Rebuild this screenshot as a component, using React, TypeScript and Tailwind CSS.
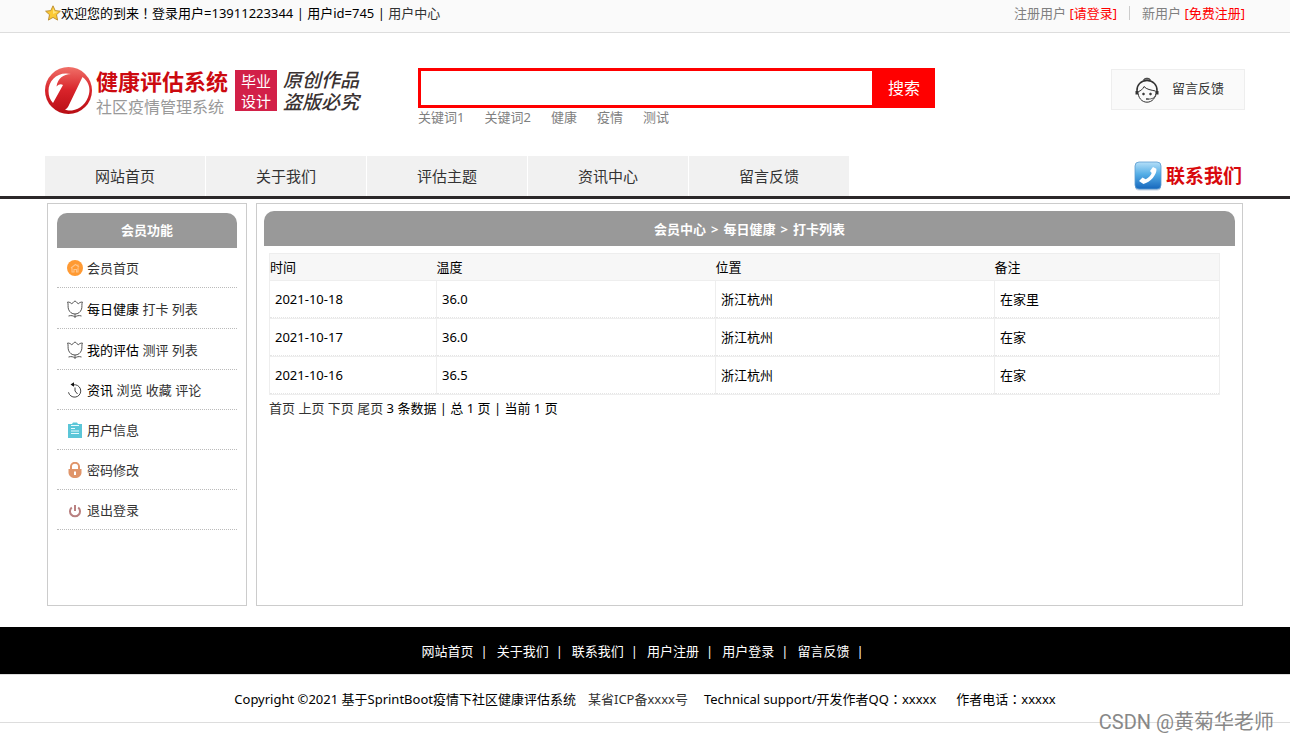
import React, { FC, ReactNode } from 'react';

const navItems = ['网站首页', '关于我们', '评估主题', '资讯中心', '留言反馈'];
const keywords = ['关键词1', '关键词2', '健康', '疫情', '测试'];
const footerItems = ['网站首页', '关于我们', '联系我们', '用户注册', '用户登录', '留言反馈'];
const records = [
  { date: '2021-10-18', temperature: '36.0', place: '浙江杭州', note: '在家里' },
  { date: '2021-10-17', temperature: '36.0', place: '浙江杭州', note: '在家' },
  { date: '2021-10-16', temperature: '36.5', place: '浙江杭州', note: '在家' },
];

const StarIcon: FC = () => (
  <svg width="16" height="16" viewBox="0 0 16 16" aria-hidden="true">
    <path
      d="M8 .8l2.2 4.8 5.2.6-3.9 3.5 1.1 5.4L8 12.4l-4.6 2.7 1.1-5.4L.6 6.2l5.2-.6z"
      fill="#fbc934"
      stroke="#b98a2e"
      strokeWidth="0.9"
      strokeLinejoin="round"
    />
    <path d="M8 3l1.5 3.4 3.4.4L8 9z" fill="#fff0a0" opacity="0.7" />
  </svg>
);

const Logo: FC = () => (
  <svg width="48" height="48" viewBox="0 0 48 48" aria-hidden="true">
    <defs>
      <linearGradient id="logo-red" x1="0" y1="0" x2="0" y2="1">
        <stop offset="0" stopColor="#f07068" />
        <stop offset="0.5" stopColor="#d8232a" />
        <stop offset="1" stopColor="#b80d14" />
      </linearGradient>
    </defs>
    <circle cx="23.5" cy="23.5" r="23.5" fill="url(#logo-red)" />
    <path d="M26 7C13 4 3.500 13 3.500 24c0 5 1.500 9 4.500 12l10-18c-2-1.500-4-1-6.500 1.500C13 11 18 7.500 26 7z" fill="#fff" />
    <path d="M37.500 10c6 4.500 8 11 6.500 17-2 9-9 15.500-17 16.500-3 .3-5 0-7-1 1.500-.6 2.500-1.500 3.500-3.500z" fill="#fff" />
  </svg>
);

const AgentIcon: FC = () => (
  <svg width="24" height="26" viewBox="0 0 24 26" fill="none" stroke="#333" aria-hidden="true">
    <path d="M8.500 3.200C9 .6 15 .6 15.500 3.200z" fill="#999" strokeWidth="1" />
    <path d="M2 14C1.500 8 6 3.500 12 3.500S22.500 8 22 14" strokeWidth="1.500" />
    <path d="M3 14c-.2 7 4 11.200 9 11.200S21.200 21 21 14" strokeWidth="1" />
    <path d="M3.500 14.500c2-.5 4.500-2.500 5.500-5 2.500 3 7 3.500 11.500 4.500" strokeWidth="1" />
    <path d="M1.800 14v3.500M22.200 14v3.500" strokeWidth="2.600" />
    <path d="M21 18.500c-1.500 2.500-4 3.500-8 3.700" strokeWidth="0.800" />
    <circle cx="8.500" cy="17" r="1" fill="#333" strokeWidth="0.600" />
    <circle cx="15.500" cy="17" r="1" fill="#333" strokeWidth="0.600" />
    <path d="M11 22h2.500" strokeWidth="1.400" />
  </svg>
);

const PhoneIcon: FC = () => (
  <svg width="28" height="30" viewBox="0 0 28 30" aria-hidden="true">
    <defs>
      <linearGradient id="phone-blue" x1="0" y1="0" x2="0" y2="1">
        <stop offset="0" stopColor="#b5dff8" />
        <stop offset="0.45" stopColor="#55aee6" />
        <stop offset="1" stopColor="#1667bd" />
      </linearGradient>
    </defs>
    <rect x="1" y="1.500" width="26" height="28" rx="4" fill="#c3d3e6" />
    <rect x="1" y="1" width="26" height="27" rx="4" fill="url(#phone-blue)" stroke="#5b9cd0" strokeWidth="0.800" />
    <path
      d="M19 6l3.400 1.800c.8 5.500-6 13.800-13 15.200l-4.400-3 3.500-3.500 3.200 1.700c2.800-1.200 5.300-3.700 6-6.200l-1.700-2z"
      fill="#fff"
    />
  </svg>
);

const HomeIcon: FC = () => (
  <svg width="16" height="16" viewBox="0 0 16 16" aria-hidden="true">
    <circle cx="8" cy="8" r="8" fill="#ff9a33" />
    <path d="M4 8l4.500-3.500L12 7M5 8v4h2V9.500h2.500V12H11V7.500M11 6V4.500" fill="none" stroke="#ffc488" strokeWidth="1.100" />
  </svg>
);

const TulipIcon: FC = () => (
  <svg width="16" height="18" viewBox="0 0 16 18" fill="none" stroke="#555" strokeWidth="1" aria-hidden="true">
    <path d="M.6 2c1.600 0 3 .7 4.100 1.700C5.800 3.200 6.800 2 8 .8c1.200 1.200 2.200 2.400 3.300 2.900C12.400 2.700 13.800 2 15.400 2c-1 2.500 0 4.500-.9 7.200C13.500 12.200 11 14 8 14s-5.500-1.800-6.500-4.800C.6 6.500 1.600 4.500.6 2z" />
    <path d="M8 14v3.500M1.500 16c2.500-.8 5-.4 6.500 1.200 1.500-1.600 4-2 6.500-1.200" />
  </svg>
);

const HistoryIcon: FC = () => (
  <svg width="16" height="16" viewBox="0 0 16 16" fill="none" stroke="#444" strokeWidth="1" aria-hidden="true">
    <path d="M5 2.800h3.500a6.200 6.200 0 1 1-7 7.500" />
    <path d="M8 5.500V9l2.500 3" />
    <path d="M3.500 2.500L7 .3v4.500z" fill="#111" stroke="none" />
  </svg>
);

const ClipboardIcon: FC = () => (
  <svg width="16" height="16" viewBox="0 0 16 16" aria-hidden="true">
    <path d="M1 2h4l1-1.500h4L11 2h4v14H1z" fill="#5bc6d8" />
    <path d="M4 3.500h8M4 6.500h4M4 9h8M4 11.500h8" stroke="#e6fafd" strokeWidth="1.200" />
  </svg>
);

const LockIcon: FC = () => (
  <svg width="16" height="16" viewBox="0 0 16 16" aria-hidden="true">
    <path d="M4 8V4.500a4 3.700 0 0 1 8 0V8" fill="none" stroke="#e0956a" strokeWidth="2" />
    <path d="M1.500 7h13v3.500c0 3.500-3 5.500-6.500 5.500s-6.500-2-6.500-5.500z" fill="#e0956a" />
    <path d="M8 9.500v3.500" stroke="#fff" strokeWidth="2" />
  </svg>
);

const PowerIcon: FC = () => (
  <svg width="16" height="16" viewBox="0 0 16 16" fill="none" stroke="#b98080" strokeWidth="2" aria-hidden="true">
    <path d="M4.800 5.500a5 5 0 1 0 6.400 0M8 3v6" />
  </svg>
);

const Link: FC<{ children: ReactNode }> = ({ children }) => (
  <a href="#" className="text-[#333] hover:text-red-600">
    {children}
  </a>
);

// full-width punctuation sits in the middle of its box in the TC face
const Mark: FC<{ children: ReactNode }> = ({ children }) => (
  <span className="font-['Noto_Sans_CJK_TC',sans-serif]">{children}</span>
);

const MenuRow: FC<{ icon: ReactNode; tall?: boolean; children: ReactNode }> = ({ icon, tall, children }) => (
  <li className={`flex items-center border-b border-dotted border-[#bbb] pt-px pl-[10px] ${tall ? 'min-h-[41px]' : 'min-h-10'}`}>
    <span className="mr-1 flex w-4 shrink-0 justify-center">{icon}</span>
    <span>{children}</span>
  </li>
);

const TopBar: FC = () => (
  <div className="border-b border-[#ddd] bg-[#fafafa]">
    <div className="mx-auto flex h-8 max-w-[1200px] items-start justify-between pt-[3px]">
      <div className="flex items-center">
        <StarIcon />
        <span>
          欢迎您的到来<Mark>！</Mark>登录用户=13911223344 | 用户id=745 | <Link>用户中心</Link>
        </span>
      </div>
      <div className="flex items-center text-[#808080]">
        <span>
          注册用户{' '}
          <a href="#" className="text-[#f00]">
            [请登录]
          </a>
        </span>
        <span className="mx-3 h-[14px] w-px bg-[#ccc]" />
        <span>
          新用户{' '}
          <a href="#" className="text-[#f00]">
            [免费注册]
          </a>
        </span>
      </div>
    </div>
  </div>
);

const Header: FC = () => (
  <header className="mx-auto flex h-[123px] max-w-[1200px] items-start pt-[34px]">
    <div className="flex w-[373px] shrink-0 items-start">
      <Logo />
      <div className="ml-[3px] flex flex-col whitespace-nowrap">
        <span className="text-[22px] leading-7 font-bold text-[#cc0a10]">健康评估系统</span>
        <span className="text-base leading-6 text-[#999]">社区疫情管理系统</span>
      </div>
      <div className="mt-[3px] ml-[7px] flex h-[41px] w-[42px] flex-col items-center justify-center bg-[#d22048] text-[15px] leading-5 text-white">
        <span>毕业</span>
        <span>设计</span>
      </div>
      <div className="mt-[2px] ml-[6px] flex flex-col text-[19px] leading-[22px] font-medium whitespace-nowrap text-[#3a3232] italic">
        <span>原创作品</span>
        <span>盗版必究</span>
      </div>
    </div>
    <div className="mt-px w-[517px]">
      <form className="flex h-10 border-[3px] border-[#f00]">
        <input type="text" aria-label="搜索" className="min-w-0 flex-1 bg-white px-2 outline-none" />
        <button type="button" className="w-[60px] bg-[#f00] pl-1 text-base text-white">
          搜索
        </button>
      </form>
      <div className="flex gap-5 leading-[18px]">
        {keywords.map((word) => (
          <a key={word} href="#" className="text-[#808080]">
            {word}
          </a>
        ))}
      </div>
    </div>
    <a href="#" className="mt-[2px] ml-auto flex h-[41px] w-[134px] items-center border border-[#eee] bg-[#fafafa] pl-[23px] text-[#333]">
      <AgentIcon />
      <span className="ml-[13px] pb-1">留言反馈</span>
    </a>
  </header>
);

const Nav: FC = () => (
  <nav className="border-b-[3px] border-[#2b2829]">
    <div className="mx-auto flex h-10 max-w-[1200px] items-center">
      <div className="flex gap-px">
        {navItems.map((item) => (
          <a key={item} href="#" className="h-10 w-40 bg-[#f1f1f1] text-center text-[15px] leading-10 text-[#333]">
            {item}
          </a>
        ))}
      </div>
      <a href="#" className="mr-[3px] ml-auto flex items-center gap-1 text-[19px] font-bold text-[#d8090d]">
        <PhoneIcon />
        联系我们
      </a>
    </div>
  </nav>
);

const Sidebar: FC = () => (
  <aside className="w-[200px] shrink-0 border border-[#ccc] p-[9px]">
    <h2 className="h-[35px] rounded-t-[10px] bg-[#999] text-center leading-[35px] font-bold text-white">会员功能</h2>
    <ul>
      <MenuRow icon={<HomeIcon />}>
        <Link>会员首页</Link>
      </MenuRow>
      <MenuRow icon={<TulipIcon />} tall>
        每日健康 <Link>打卡</Link> <Link>列表</Link>
      </MenuRow>
      <MenuRow icon={<TulipIcon />} tall>
        我的评估 <Link>测评</Link> <Link>列表</Link>
      </MenuRow>
      <MenuRow icon={<HistoryIcon />}>
        资讯 <Link>浏览</Link> <Link>收藏</Link> <Link>评论</Link>
      </MenuRow>
      <MenuRow icon={<ClipboardIcon />}>
        <Link>用户信息</Link>
      </MenuRow>
      <MenuRow icon={<LockIcon />}>
        <Link>密码修改</Link>
      </MenuRow>
      <MenuRow icon={<PowerIcon />}>
        <Link>退出登录</Link>
      </MenuRow>
    </ul>
  </aside>
);

const Cell: FC<{ children: ReactNode }> = ({ children }) => (
  <td className="border border-[#eee] p-0">
    <div className="h-[37px] border-b border-dotted border-[#e5e5e5] pl-[5px] leading-[36px]">{children}</div>
  </td>
);

const RecordTable: FC = () => (
  <table className="w-full table-fixed border-collapse">
    <colgroup>
      <col className="w-[167px]" />
      <col className="w-[279px]" />
      <col className="w-[279px]" />
      <col />
    </colgroup>
    <thead>
      <tr className="h-[27px] border border-[#eee] bg-[#f7f7f7] text-left leading-[26px]">
        <th className="p-0 font-normal">时间</th>
        <th className="p-0 font-normal">温度</th>
        <th className="p-0 font-normal">位置</th>
        <th className="p-0 font-normal">备注</th>
      </tr>
    </thead>
    <tbody>
      {records.map((record) => (
        <tr key={record.date}>
          <Cell>{record.date}</Cell>
          <Cell>{record.temperature}</Cell>
          <Cell>{record.place}</Cell>
          <Cell>{record.note}</Cell>
        </tr>
      ))}
    </tbody>
  </table>
);

const Footer: FC = () => (
  <footer className="mt-[21px]">
    <div className="flex h-[47px] items-center justify-center bg-black pl-1 text-white">
      {footerItems.map((item) => (
        <span key={item} className="mr-[9px] flex">
          <a href="#" className="mr-[7px]">
            {item}
          </a>
          |
        </span>
      ))}
    </div>
    <div className="flex h-[49px] items-center justify-center border-y border-[#ddd]">
      <span className="mr-3">Copyright ©2021 基于SprintBoot疫情下社区健康评估系统</span>
      <Link>某省ICP备xxxx号</Link>
      <span className="ml-4">
        Technical support/开发作者QQ<Mark>：</Mark>xxxxx
      </span>
      <span className="ml-5">
        作者电话<Mark>：</Mark>xxxxx
      </span>
    </div>
  </footer>
);

export default function App() {
  return (
    <div className="relative bg-white pb-[19px] font-['Noto_Sans','Noto_Sans_CJK_SC',sans-serif] text-[13px] leading-5 text-black">
      <TopBar />
      <Header />
      <Nav />
      <main className="mx-auto mt-1 flex min-h-[403px] max-w-[1200px] gap-[9px] px-[2px]">
        <Sidebar />
        <section className="min-w-0 flex-1 border border-[#ccc] p-[7px]">
          <h1 className="flex h-[35px] items-center justify-center gap-[5px] rounded-t-[10px] bg-[#999] font-bold text-white">
            <span>会员中心</span>
            <span>&gt;</span>
            <span>每日健康</span>
            <span>&gt;</span>
            <span>打卡列表</span>
          </h1>
          <div className="mt-[7px] mr-[15px] ml-[5px]">
            <RecordTable />
            <div className="mt-[3px]">
              <Link>首页</Link> <Link>上页</Link> <Link>下页</Link> <Link>尾页</Link> 3 条数据 | 总 1 页 | 当前 1 页
            </div>
          </div>
        </section>
      </main>
      <Footer />
      <div className="absolute right-4 bottom-2 font-['Roboto','Noto_Sans_CJK_SC',sans-serif] text-xl leading-6 text-[#888]">
        CSDN @黄菊华老师
      </div>
    </div>
  );
}
